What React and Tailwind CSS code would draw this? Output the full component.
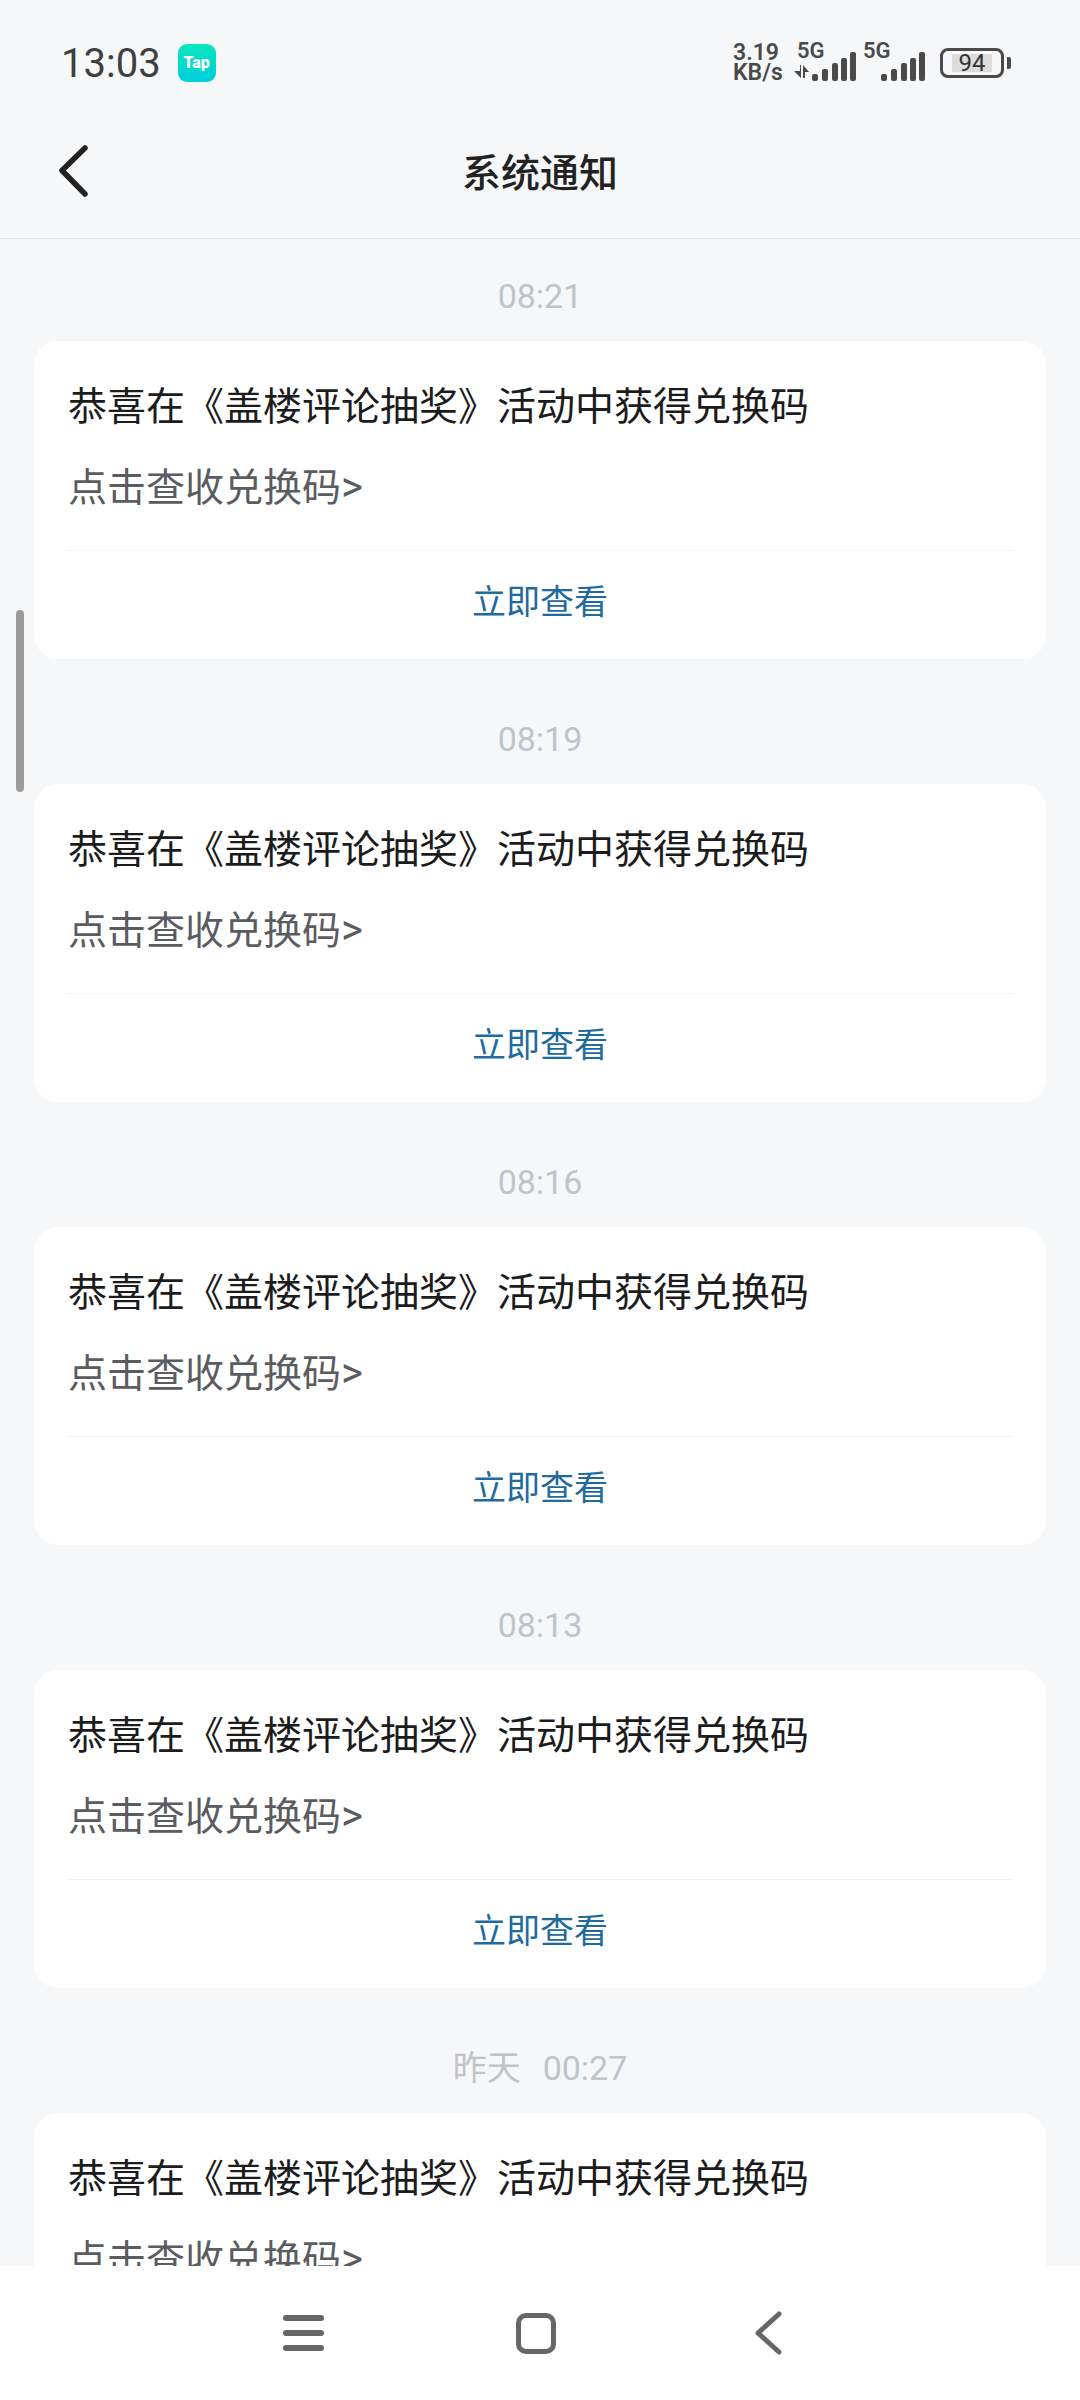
const font = { fontFamily: '"Roboto", "Noto Sans CJK SC", sans-serif' };

const Signal = ({ dim }) => (
  <svg width="62" height="30" viewBox="0 0 62 30" fill="#4a4a4a">
    {dim && (
      <>
        <path d="M0 20h6v-6h1v13z" />
        <path d="M9 14l6 7H11v6H9z" />
      </>
    )}
    <rect x="18" y="23" width="6" height="7" rx="2" />
    <rect x="28" y="18" width="6" height="12" rx="2" />
    <rect x="38" y="12" width="6" height="18" rx="2" />
    <rect x="47" y="7" width="6" height="23" rx="2" />
    <rect x="56" y="1" width="6" height="29" rx="2" />
  </svg>
);

const Card = ({ time }) => (
  <>
    <div className="mt-[57px] mb-[22px] h-[46px] first:mt-[34px] flex items-center justify-center gap-[22px] text-[34px] text-[#bfc4ca]">
      {time}
    </div>
    <div className="mx-[34px] h-[318px] rounded-[24px] bg-white px-[34px] pt-[36px]">
      <p className="text-[39px] leading-[60px] text-[#1c1c1c]">恭喜在《盖楼评论抽奖》活动中获得兑换码</p>
      <p className="mt-[20px] text-[39px] leading-[60px] text-[#5a5c60]">
        点击查收兑换码<span className="text-[42px]">&gt;</span>
      </p>
      <div className="mt-[32px] h-[104px] border-t border-[#f1f2f3] flex items-center justify-center text-[34px] text-[#1f6a9e]">
        立即查看
      </div>
    </div>
  </>
);

export default function App() {
  return (
    <div className="relative flex h-[2400px] w-[1080px] flex-col overflow-hidden bg-[#f6f7f9]" style={font}>
      {/* status bar */}
      <div className="flex h-[126px] shrink-0 items-center justify-between pl-[61px] pr-[69px]">
        <div className="flex items-center gap-[17px]">
          <span className="mt-[2px] text-[40px] text-[#3f3f3f]">13:03</span>
          <div className="flex h-[38px] w-[38px] items-center justify-center rounded-[9px] bg-gradient-to-b from-[#0be5bd] to-[#00cfdc]">
            <span className="text-[16px] font-black leading-none text-white">Tap</span>
          </div>
        </div>
        <div className="flex items-center text-[#4a4a4a]">
          <div className="flex w-[61px] flex-col text-[23px] font-semibold leading-[20px]">
            <span>3.19</span>
            <span>KB/s</span>
          </div>
          <div className="relative h-[36px] w-[62px]">
            <span className="absolute left-[3px] top-[-4px] text-[22px] font-semibold leading-[20px]">5G</span>
            <div className="absolute bottom-0 left-0">
              <Signal dim />
            </div>
          </div>
          <div className="relative ml-[7px] h-[36px] w-[62px]">
            <span className="absolute left-0 top-[-4px] text-[22px] font-semibold leading-[20px]">5G</span>
            <div className="absolute bottom-0 left-0">
              <Signal />
            </div>
          </div>
          <div className="ml-[15px] flex items-center gap-[3px]">
            <div className="flex h-[30px] w-[64px] items-center justify-center rounded-[8px] border-[3px] border-[#4a4a4a] p-[3px]">
              <div className="flex h-full w-[40px] items-center justify-center bg-[#dcdcdc] text-[24px] leading-none text-[#333]">
                94
              </div>
            </div>
            <div className="h-[12px] w-[4px] rounded-r-[2px] bg-[#4a4a4a]" />
          </div>
        </div>
      </div>

      {/* header */}
      <div className="relative flex h-[113px] shrink-0 items-center justify-center border-b border-[#e8e9eb]">
        <svg className="absolute left-[58px] top-[19px]" width="30" height="52" viewBox="0 0 30 52" fill="none">
          <path d="M27 3L4 25.5 27 49" stroke="#222" strokeWidth="5.5" strokeLinecap="round" strokeLinejoin="round" />
        </svg>
        <h1 className="mt-[-15px] text-[39px] font-medium text-[#222]">系统通知</h1>
      </div>

      {/* list */}
      <div className="relative min-h-0 flex-1 overflow-hidden">
        <Card time="08:21" />
        <Card time="08:19" />
        <Card time="08:16" />
        <Card time="08:13" />
        <Card time={<><span>昨天</span><span>00:27</span></>} />
      </div>

      {/* scroll thumb */}
      <div className="absolute left-[16px] top-[610px] h-[182px] w-[8px] rounded-[4px] bg-[#9b9b9b]" />

      {/* nav bar */}
      <div className="flex h-[134px] shrink-0 items-center bg-white pl-[283px]">
        <div className="flex h-[36px] w-[41px] flex-col justify-between">
          <div className="h-[6px] rounded-full bg-[#666]" />
          <div className="h-[6px] rounded-full bg-[#666]" />
          <div className="h-[6px] rounded-full bg-[#666]" />
        </div>
        <div className="ml-[192px] h-[41px] w-[40px] rounded-[10px] border-[5px] border-[#666]" />
        <svg className="ml-[198px]" width="28" height="44" viewBox="0 0 28 44" fill="none">
          <path d="M25 3L4 22l21 19" stroke="#666" strokeWidth="5" strokeLinecap="round" strokeLinejoin="round" />
        </svg>
      </div>
    </div>
  );
}
